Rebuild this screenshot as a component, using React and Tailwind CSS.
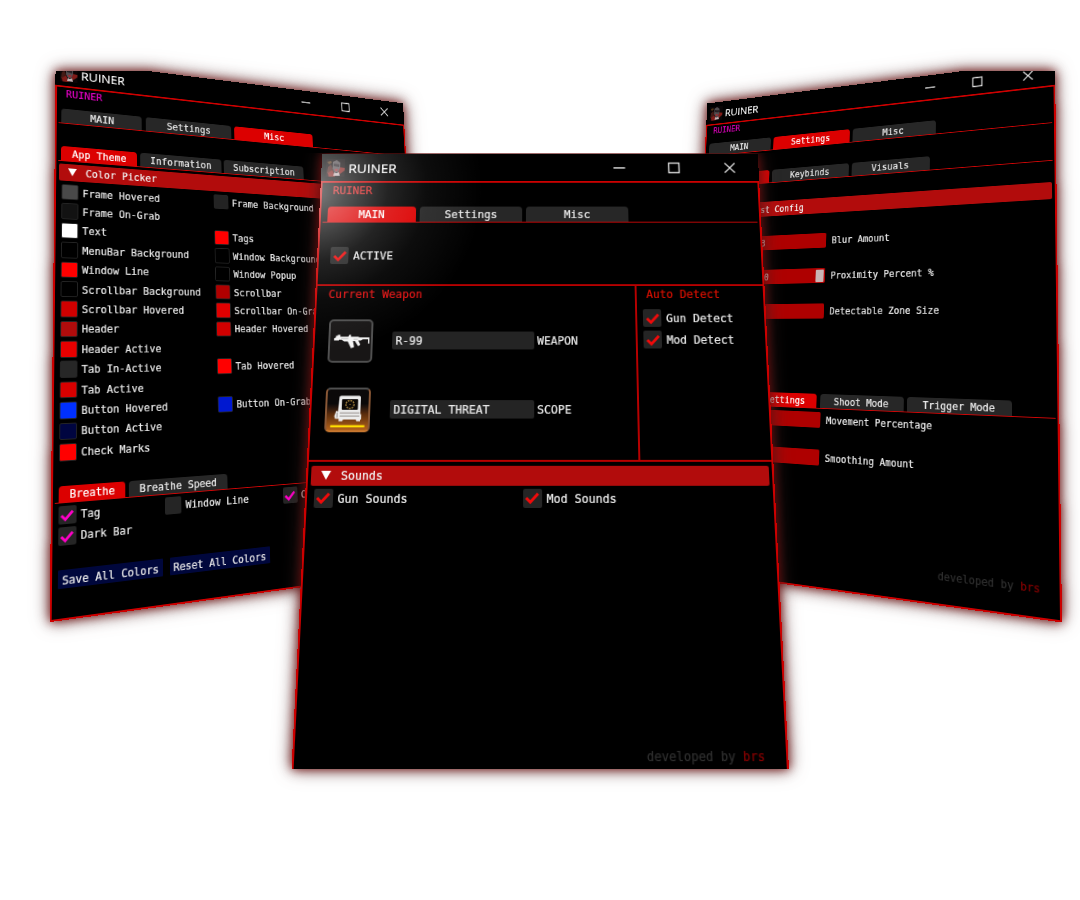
import React from 'react';

// Projective transform that maps a w x h box onto the four corners tl, tr, br, bl.
function project(w, h, [[x0, y0], [x1, y1], [x2, y2], [x3, y3]]) {
  const dx1 = x1 - x2, dx2 = x3 - x2, sx = x0 - x1 + x2 - x3;
  const dy1 = y1 - y2, dy2 = y3 - y2, sy = y0 - y1 + y2 - y3;
  const d = dx1 * dy2 - dx2 * dy1;
  const g = (sx * dy2 - dx2 * sy) / d, k = (dx1 * sy - sx * dy1) / d;
  const m = [
    (x1 - x0 + g * x1) / w, (y1 - y0 + g * y1) / w, 0, g / w,
    (x3 - x0 + k * x3) / h, (y3 - y0 + k * y3) / h, 0, k / h,
    0, 0, 1, 0,
    x0, y0, 0, 1,
  ];
  return `matrix3d(${m.map((n) => n.toFixed(9)).join(',')})`;
}

const LEFT = project(470, 590, [[55.4, 85.5], [404.3, 125.3], [429.8, 568.8], [49.7, 621.2]]) + ' translateY(-32px)';
const RIGHT = project(470, 590, [[706.2, 125.5], [1055.3, 85.5], [1062, 621.5], [681, 569]]) + ' translateY(-32px)';
const CENTER = project(470, 622, [[322.2, 154], [757.8, 154], [789, 769], [291.5, 769]]);

function Avatar() {
  return (
    <svg viewBox="0 0 20 20" className="h-[20px] w-[20px] opacity-90">
      <rect width="20" height="20" fill="#0c0607" />
      <path d="M1 3l4-1 1 2-3 2z" fill="#5c3a18" />
      <path d="M2 9l3-3 2 5-4 6-2-1z" fill="#4c1d18" />
      <path d="M13 9l7 1v3l-5 4-3-4zM2 16l5-4 3 8H3z" fill="#8c1f1b" />
      <path d="M7 3l4-2 4 3v6l-2 5H9L7 11z" fill="#5b5558" />
      <path d="M8 5l6 1v3l-6-1z" fill="#2a2226" />
      <path d="M9 11h4l-1 3h-2z" fill="#a7323a" />
      <path d="M9 15l2 1 3-1 1 4H8z" fill="#d9c4c6" />
    </svg>
  );
}

function Window({ matrix, tag, footless, children }) {
  return (
    <div
      className="absolute left-0 top-0 flex w-[470px] origin-top-left flex-col overflow-hidden bg-black font-['DejaVu_Sans_Mono',monospace] text-[11.63px] leading-[13px] text-[#ebebeb] [-webkit-text-stroke:0.2px]"
      style={{ transform: matrix }}
    >
      <div className="flex h-[31px] items-center pl-[5px]">
        <Avatar />
        <span className="ml-1 w-[285px] font-['Open_Sans',sans-serif] text-[14.6px] leading-5 text-white">RUINER</span>
        <svg viewBox="0 0 134 14" className="h-[14px] w-[134px]" fill="none" stroke="#e2e2e2" strokeWidth="1.4">
          <path d="M0 7h12.500M59.500 1.500h11v11h-11zM119.500 1.500l11 11m0-11l-11 11" />
        </svg>
      </div>
      <div className={footless ? 'flex h-[591px] flex-col border-2 border-b-0 border-[#cc0000]' : 'flex h-[592px] flex-col border-2 border-[#cc0000]'}>
        <div className={tag}>RUINER</div>
        {children}
      </div>
    </div>
  );
}

function Tabs({ className, items }) {
  return (
    <div className={'mx-[2px] flex h-[18.500px] shrink-0 items-end border-b border-[#d00606] ' + className}>
      {items.map(([label, width, on]) => (
        <div
          key={label}
          className={'flex h-[17px] shrink-0 items-center justify-center rounded-t-[4px] pt-[2px] ' + width + (on ? ' bg-[#dc0000] text-white' : ' bg-[#272727]')}
        >
          {label}
        </div>
      ))}
    </div>
  );
}

function Header({ className, children }) {
  return (
    <div className={'mx-[3px] flex h-[20px] shrink-0 items-center rounded-[2px] bg-[#b20c0c] pl-[10px] text-[#f2f2f2] ' + className}>
      <svg viewBox="0 0 10 9" className="mr-[10px] h-[9px] w-[10px]"><path d="M0 0h10L5 9z" fill="#fff" /></svg>
      <span className="pt-[2px]">{children}</span>
    </div>
  );
}

function Check({ on = true, color = '#f00a0a', label, className = '' }) {
  return (
    <div className={'flex h-[19px] items-center ' + className}>
      <div className="mr-[5px] flex h-[19px] w-[19px] shrink-0 items-center justify-center rounded-[2px] bg-[#252525]">
        {on && (
          <svg viewBox="0 0 14 14" className="h-[14px] w-[14px]" fill="none" stroke={color} strokeWidth="2.900">
            <path d="M1 7l4.200 4.200L13 2.800" />
          </svg>
        )}
      </div>
      <span className="whitespace-nowrap pt-[2px]">{label}</span>
    </div>
  );
}

function Swatch({ color, label }) {
  return (
    <div className="flex w-[182px] shrink-0 items-center">
      {label && (
        <>
          <div className={'mr-[5px] h-[18.500px] w-[18.500px] shrink-0 rounded-[2px] border border-[#242424] ' + color} />
          <span className="whitespace-nowrap pt-[2px]">{label}</span>
        </>
      )}
    </div>
  );
}

const SWATCHES = [
  ['bg-[#494949]', 'Frame Hovered', 'bg-[#232323]', 'Frame Background'],
  ['bg-[#121212]', 'Frame On-Grab'],
  ['bg-[#ffffff]', 'Text', 'bg-[#ff0000]', 'Tags'],
  ['bg-[#000000]', 'MenuBar Background', 'bg-[#000000]', 'Window Background'],
  ['bg-[#ff0000]', 'Window Line', 'bg-[#000000]', 'Window Popup'],
  ['bg-[#000000]', 'Scrollbar Background', 'bg-[#b00000]', 'Scrollbar'],
  ['bg-[#d00000]', 'Scrollbar Hovered', 'bg-[#e00000]', 'Scrollbar On-Grab'],
  ['bg-[#b00c0c]', 'Header', 'bg-[#d00000]', 'Header Hovered'],
  ['bg-[#e80000]', 'Header Active'],
  ['bg-[#272727]', 'Tab In-Active', 'bg-[#ff0000]', 'Tab Hovered'],
  ['bg-[#d80000]', 'Tab Active'],
  ['bg-[#0030ff]', 'Button Hovered', 'bg-[#0018d0]', 'Button On-Grab'],
  ['bg-[#000540]', 'Button Active'],
  ['bg-[#ff0000]', 'Check Marks'],
];

function ThemeWindow() {
  return (
    <Window matrix={LEFT} tag="mt-[2px] pl-[10px] text-[#e000c0]">
      <Tabs
        className="mt-[10px] gap-[4.500px] pl-[3px]"
        items={[['MAIN', 'w-[94px]'], ['Settings', 'w-[109px]'], ['Misc', 'w-[109px]', true]]}
      />
      <Tabs
        className="mt-[27px] gap-[3.500px] pl-[3px]"
        items={[['App Theme', 'w-[88px]', true], ['Information', 'w-[102px]'], ['Subscription', 'w-[109px]']]}
      />
      <Header className="mt-[2.500px]">Color Picker</Header>
      <div className="mt-[2.500px] flex flex-col pl-[6px]">
        {SWATCHES.map(([c1, l1, c2, l2]) => (
          <div key={l1} className="flex h-[22.400px] items-center">
            <Swatch color={c1} label={l1} />
            <Swatch color={c2} label={l2} />
          </div>
        ))}
      </div>
      <Tabs
        className="mt-[24.500px] gap-[3.500px] pl-[4px]"
        items={[['Breathe', 'w-[72px]', true], ['Breathe Speed', 'w-[116px]']]}
      />
      <div className="mt-[3px] flex pl-[5.500px]">
        <Check color="#ff00c8" label="Tag" className="w-[117.500px]" />
        <Check color="#ff00c8" on={false} label="Window Line" className="w-[144.500px]" />
        <Check color="#ff00c8" label="Clock" />
      </div>
      <div className="mt-[3px] flex pl-[5.500px]">
        <Check color="#ff00c8" label="Dark Bar" />
      </div>
      <div className="mt-[25px] flex gap-[8px] pl-[6px]">
        <div className="flex h-[18.500px] w-[113.500px] items-center justify-center rounded-[1px] bg-[#00073c] pt-[3px]">Save All Colors</div>
        <div className="flex h-[18.500px] w-[121px] items-center justify-center rounded-[1px] bg-[#00073c] pt-[3px]">Reset All Colors</div>
      </div>
    </Window>
  );
}

function Slider({ value, label, grab, className }) {
  return (
    <div className={'flex shrink-0 items-center pl-[6px] ' + className}>
      <div className="relative mr-[8px] flex h-[19px] w-[178.500px] items-center justify-center rounded-[2px] bg-[#ae0000] pt-[2px]">
        {value}
        {grab && <div className="absolute right-[1.500px] top-[1.500px] h-[16px] w-[11px] rounded-[1px] bg-[#c8b4b4]" />}
      </div>
      <span className="pt-[2px]">{label}</span>
    </div>
  );
}

function Credit({ className }) {
  return (
    <div className={'text-right text-[#303030] ' + className}>
      developed by <span className="text-[#860000]">brs</span>
    </div>
  );
}

function SettingsWindow() {
  return (
    <Window matrix={RIGHT} tag="mt-[2px] pl-[10px] text-[#d000b0]">
      <Tabs
        className="mt-[10px] gap-[4px] pl-[3px]"
        items={[['MAIN', 'w-[94.500px]'], ['Settings', 'w-[109px]', true], ['Misc', 'w-[109px]']]}
      />
      <Tabs
        className="mt-[27px] gap-[4px] pl-[3px]"
        items={[['General', 'w-[95px]', true], ['Keybinds', 'w-[109px]'], ['Visuals', 'w-[102px]']]}
      />
      <Header className="mt-[25px]">Aim Assist Config</Header>
      <Slider className="mt-[26px]" value="3" label="Blur Amount" />
      <Slider className="mt-[26px]" value="100" label="Proximity Percent %" grab />
      <Slider className="mt-[25.500px]" value="2" label="Detectable Zone Size" />
      <Tabs
        className="mt-[93px] gap-[4.500px] pl-[62px]"
        items={[['Aim Settings', 'w-[115px]', true], ['Shoot Mode', 'w-[107px]'], ['Trigger Mode', 'w-[122px]']]}
      />
      <Slider className="mt-[4px]" label="Movement Percentage" />
      <Slider className="mt-[25.500px]" label="Smoothing Amount" />
      <Credit className="mt-[105.500px] pr-[20px]" />
    </Window>
  );
}

function Gun() {
  return (
    <svg viewBox="0 0 46 46" className="h-full w-full">
      <path d="M4 20l2-1v-2h2v-1h3v2h9l1-2h2v2h9v1h12v7h-1.500v-5h-6l-2 1.500h-3l2.500 5-2.500 1.500-4-6h-2l1.500 7-3.500 1.500-4-8h-4l-3-2h-3v1H4z" fill="#f4f4f4" />
      <path d="M12 20.500h8M26 21h5" stroke="#b8b8b8" strokeWidth=".8" />
    </svg>
  );
}

function Scope() {
  return (
    <svg viewBox="0 0 46 46" className="h-full w-full">
      <path d="M13 9q0-2 2-2h20q2 0 2 2v18l1 2v5h-1v2h-4l-1-2H18l-1 2h-4v-3H9l-1-3 2-6 2 1z" fill="#ededed" />
      <path d="M16 12q0-1 1-1h16q1 0 1 1v10q0 1-1 1H17q-1 0-1-1z" fill="#0b0806" />
      <circle cx="25" cy="17" r="4.500" fill="none" stroke="#9a7a3a" strokeWidth="1.600" strokeDasharray="2 1" />
      <path d="M24.500 17h1" stroke="#c09a3a" />
      <path d="M14 26.500h22M14 30h22M11 26v6" stroke="#8a8480" strokeWidth="1" fill="none" />
      <path d="M4 41.500h38" stroke="#ffe000" strokeWidth="2.400" />
    </svg>
  );
}

function Loadout({ icon, box, value, name }) {
  return (
    <div className="flex h-[46px] items-center pl-[13.500px]">
      <div className={'mr-[19.500px] h-[46px] w-[46.500px] shrink-0 overflow-hidden rounded-[5px] border-2 ' + box}>{icon}</div>
      <div className="mb-[2px] mr-[3px] flex h-[19px] w-[147.500px] items-center rounded-[2px] bg-[#242424] pl-[4px] pt-[2px]">{value}</div>
      <span>{name}</span>
    </div>
  );
}

function MainWindow() {
  return (
    <Window matrix={CENTER} tag="mt-[3px] pl-[11.500px] text-[#e42020]" footless>
      <Tabs
        className="mt-[10px] gap-[4px] pl-[4.500px]"
        items={[['MAIN', 'w-[94.500px]', true], ['Settings', 'w-[109px]'], ['Misc', 'w-[109px]']]}
      />
      <Check label="ACTIVE" className="mt-[27.500px] shrink-0 pl-[12px]" />
      <div className="mt-[22px] flex h-[185.500px] shrink-0 border-y-2 border-[#b80000]">
        <div className="flex w-[334px] flex-col border-r-2 border-[#b80000] pt-[3px]">
          <div className="mb-[20px] pl-[12px] text-[#e01414]">Current Weapon</div>
          <Loadout icon={<Gun />} box="border-[#505050] bg-[#181616]" value="R-99" name="WEAPON" />
          <div className="h-[26px]" />
          <Loadout
            icon={<Scope />}
            box="border-x-[#8a5836] border-t-[#505050] border-b-[#c87830] bg-linear-to-b from-[#0b0909] from-35% via-[#5a2c0c] via-60% to-[#b5641c]"
            value="DIGITAL THREAT"
            name="SCOPE"
          />
        </div>
        <div className="flex flex-col pt-[3px] pl-[6px]">
          <div className="mb-[9px] pl-[4px] text-[#d81000]">Auto Detect</div>
          <Check label="Gun Detect" className="mb-[4px]" />
          <Check label="Mod Detect" />
        </div>
      </div>
      <Header className="mt-[4px]">Sounds</Header>
      <div className="mt-[3px] flex pl-[6.500px]">
        <Check label="Gun Sounds" className="w-[209px]" />
        <Check label="Mod Sounds" />
      </div>
      <Credit className="mt-[227px] pr-[20px]" />
      <div className="absolute inset-0 bg-[radial-gradient(circle_at_-6px_42px,rgba(255,255,255,.5)_0,rgba(255,255,255,.34)_32px,rgba(255,255,255,.14)_78px,rgba(255,255,255,.05)_120px,transparent_180px)]" />
    </Window>
  );
}

const GLOW = ' [filter:drop-shadow(0_0_5px_rgba(120,0,0,.75))_drop-shadow(0_0_8px_rgba(80,40,40,.8))]';

export default function App() {
  return (
    <main className="relative h-[900px] w-[1080px] overflow-hidden bg-white">
      <div className={'absolute inset-0' + GLOW}>
        <div className="absolute inset-0 [clip-path:inset(71.5px_0_0_0)]"><ThemeWindow /></div>
      </div>
      <div className={'absolute inset-0' + GLOW}>
        <div className="absolute inset-0 [clip-path:inset(71.5px_0_0_0)]"><SettingsWindow /></div>
      </div>
      <div className="absolute inset-0 [clip-path:inset(153px_0_0_0)]">
        <div className={'absolute inset-0' + GLOW}><MainWindow /></div>
      </div>
    </main>
  );
}
